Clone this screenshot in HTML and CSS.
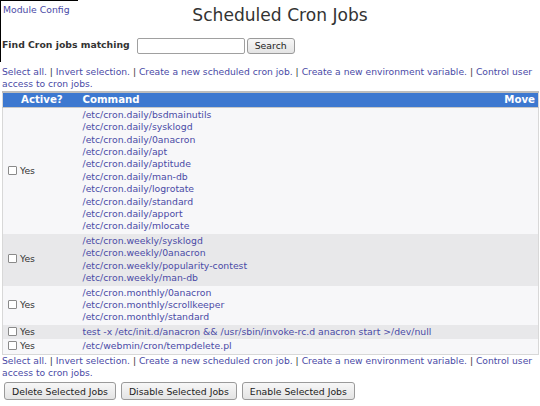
FILE: index.html
```html
<!DOCTYPE html>
<html>
<head>
<meta charset="utf-8">
<link rel="stylesheet" href="styles.css">
</head>
<body>
<div class="corner"></div>
<div class="top">
  <div class="left"><a href="#">Module Config</a></div>
  <h1 class="title">Scheduled Cron Jobs</h1>
</div>
<form class="find">
  <label class="find-label">Find Cron jobs matching</label>
  <input class="find-input" type="text">
  <button class="btn search" type="button">Search</button>
</form>
<div class="links">
  <a href="#">Select all.</a> | <a href="#">Invert selection.</a> | <a href="#">Create a new scheduled cron job.</a> | <a href="#">Create a new environment variable.</a> | <a href="#">Control user access to cron jobs.</a>
</div>
<table class="jobs">
  <thead>
    <tr><th class="c-active">Active?</th><th class="c-cmd">Command</th><th class="c-move">Move</th></tr>
  </thead>
  <tbody>
    <tr class="odd">
      <td class="c-active"><input type="checkbox" class="cb"> Yes</td>
      <td class="c-cmd">
        <a href="#">/etc/cron.daily/bsdmainutils</a><br>
        <a href="#">/etc/cron.daily/sysklogd</a><br>
        <a href="#">/etc/cron.daily/0anacron</a><br>
        <a href="#">/etc/cron.daily/apt</a><br>
        <a href="#">/etc/cron.daily/aptitude</a><br>
        <a href="#">/etc/cron.daily/man-db</a><br>
        <a href="#">/etc/cron.daily/logrotate</a><br>
        <a href="#">/etc/cron.daily/standard</a><br>
        <a href="#">/etc/cron.daily/apport</a><br>
        <a href="#">/etc/cron.daily/mlocate</a>
      </td>
      <td></td>
    </tr>
    <tr class="even">
      <td class="c-active"><input type="checkbox" class="cb"> Yes</td>
      <td class="c-cmd">
        <a href="#">/etc/cron.weekly/sysklogd</a><br>
        <a href="#">/etc/cron.weekly/0anacron</a><br>
        <a href="#">/etc/cron.weekly/popularity-contest</a><br>
        <a href="#">/etc/cron.weekly/man-db</a>
      </td>
      <td></td>
    </tr>
    <tr class="odd">
      <td class="c-active"><input type="checkbox" class="cb"> Yes</td>
      <td class="c-cmd">
        <a href="#">/etc/cron.monthly/0anacron</a><br>
        <a href="#">/etc/cron.monthly/scrollkeeper</a><br>
        <a href="#">/etc/cron.monthly/standard</a>
      </td>
      <td></td>
    </tr>
    <tr class="even">
      <td class="c-active"><input type="checkbox" class="cb"> Yes</td>
      <td class="c-cmd"><a href="#">test -x /etc/init.d/anacron &amp;&amp; /usr/sbin/invoke-rc.d anacron start &gt;/dev/null</a></td>
      <td></td>
    </tr>
    <tr class="odd">
      <td class="c-active"><input type="checkbox" class="cb"> Yes</td>
      <td class="c-cmd"><a href="#">/etc/webmin/cron/tempdelete.pl</a></td>
      <td></td>
    </tr>
  </tbody>
</table>
<div class="links">
  <a href="#">Select all.</a> | <a href="#">Invert selection.</a> | <a href="#">Create a new scheduled cron job.</a> | <a href="#">Create a new environment variable.</a> | <a href="#">Control user access to cron jobs.</a>
</div>
<div class="actions">
  <button class="btn" type="button">Delete Selected Jobs</button>
  <button class="btn" type="button">Disable Selected Jobs</button>
  <button class="btn" type="button">Enable Selected Jobs</button>
</div>
</body>
</html>
```
FILE: styles.css
```css
html, body {
  margin: 0;
  padding: 0;
  background: #ffffff;
}
body {
  font-family: "DejaVu Sans", sans-serif;
  font-size: 9.3px;
  line-height: 12.4px;
  color: #333333;
  padding: 0 2px;
  position: relative;
}
a {
  color: #4a4aa6;
  text-decoration: none;
}
.corner {
  position: absolute;
  left: 0;
  top: 0;
  width: 78px;
  height: 62px;
  border-top: 1px solid #000;
  border-left: 1px solid #000;
  box-sizing: border-box;
  pointer-events: none;
}
.top {
  display: grid;
  grid-template-columns: 1fr auto 1fr;
  height: 32px;
}
.left {
  padding-top: 4px;
  padding-left: 1px;
}
.title {
  margin: 0;
  font-weight: normal;
  font-size: 17.1px;
  line-height: 30px;
  color: #333;
  padding-left: 20px;
}
.find {
  display: flex;
  align-items: center;
  height: 17px;
  margin: 5px 0 0 0;
}
.find-label {
  font-weight: bold;
  margin-right: 7px;
}
.find-input {
  width: 108px;
  height: 16px;
  box-sizing: border-box;
  border: 1px solid #a0a0a0;
  border-radius: 2px;
  margin: 0 2px 0 0;
  padding: 0;
}
.btn {
  font-family: "DejaVu Sans", sans-serif;
  font-size: 9.3px;
  color: #222;
  height: 18px;
  padding: 0 6px;
  border: 1px solid #9a9a9a;
  border-radius: 3px;
  background: linear-gradient(#f7f7f7, #e4e4e4);
  box-sizing: border-box;
  margin: 0;
}
.search {
  width: 48px;
  height: 16px;
  padding: 0;
}
.links {
  margin-top: 12px;
  font-size: 9.2px;
}
.jobs + .links {
  margin-top: 0;
}
.jobs {
  width: 537px;
  margin-top: 0;
  border-collapse: collapse;
  border: 1px solid #d8d8d8;
  border-top: 2px solid #bdbdbd;
}
.jobs th {
  background: #3d78d0;
  color: #fff;
  font-weight: bold;
  font-size: 10.2px;
  text-align: left;
  height: 14px;
  padding: 0;
  line-height: 14px;
  border-bottom: 1px solid #c8c8c8;
}
.jobs th.c-active {
  width: 80px;
  padding-left: 18px;
  box-sizing: border-box;
}
.jobs th.c-move {
  text-align: right;
  padding-right: 3px;
}
.jobs td {
  padding: 1px 0;
  vertical-align: middle;
}
.jobs td.c-active {
  padding-left: 5px;
  white-space: nowrap;
}
.jobs td.c-cmd {
  white-space: nowrap;
}
.jobs tr.odd td {
  background: #f7f7f9;
}
.jobs tr.even td {
  background: #e8e8ea;
}
.cb {
  appearance: none;
  -webkit-appearance: none;
  width: 9px;
  height: 9px;
  margin: 0;
  border: 1px solid #8a8a8a;
  border-radius: 1px;
  background: #fff;
  vertical-align: -1px;
  box-sizing: border-box;
}
.actions {
  display: flex;
  gap: 5px;
  margin-top: 3px;
  padding-left: 2px;
}
.actions .btn {
  padding: 0 7px;
}
```
